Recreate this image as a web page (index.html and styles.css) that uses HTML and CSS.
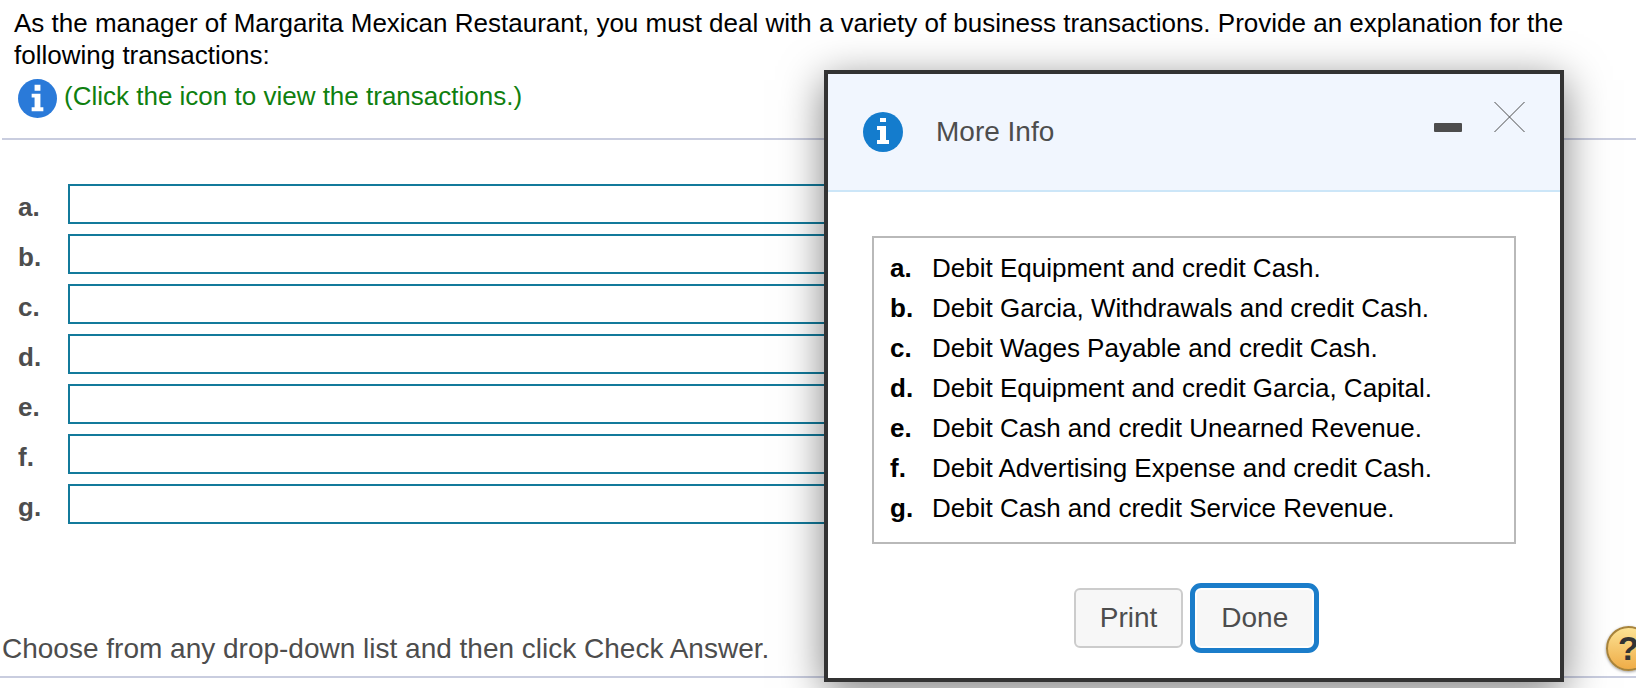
FILE: index.html
```html
<!DOCTYPE html>
<html lang="en">
<head>
  <meta charset="UTF-8">
  <meta name="viewport" content="width=device-width, initial-scale=1.0">
  <title>Margarita Mexican Restaurant</title>
  <link rel="stylesheet" href="styles.css">
</head>
<body>

<main class="page">
  <section class="question">
    <p class="intro">As the manager of Margarita Mexican Restaurant, you must deal with a variety of business transactions. Provide an explanation for the following transactions:</p>
    <a class="info-link" href="#more-info">
      <svg class="info-icon info-icon-small" viewBox="0 0 40 40" aria-hidden="true">
        <circle cx="20" cy="20" r="20"/>
        <path d="M17 6h6v6h-6zM14 15h9v14h3v4H14v-4h3V19h-3z"/>
      </svg>
      <span>(Click the icon to view the transactions.)</span>
    </a>
  </section>

  <form class="answers">
    <div class="answer-row"><label for="answer-a">a.</label><select id="answer-a"><option></option></select></div>
    <div class="answer-row"><label for="answer-b">b.</label><select id="answer-b"><option></option></select></div>
    <div class="answer-row"><label for="answer-c">c.</label><select id="answer-c"><option></option></select></div>
    <div class="answer-row"><label for="answer-d">d.</label><select id="answer-d"><option></option></select></div>
    <div class="answer-row"><label for="answer-e">e.</label><select id="answer-e"><option></option></select></div>
    <div class="answer-row"><label for="answer-f">f.</label><select id="answer-f"><option></option></select></div>
    <div class="answer-row"><label for="answer-g">g.</label><select id="answer-g"><option></option></select></div>
  </form>

  <footer class="hint">
    <p>Choose from any drop-down list and then click Check Answer.</p>
    <button class="help" type="button" aria-label="Help">?</button>
  </footer>
</main>

<div class="modal" id="more-info" role="dialog" aria-labelledby="modal-title">
  <div class="modal-header">
    <svg class="info-icon" viewBox="0 0 40 40" aria-hidden="true">
      <circle cx="20" cy="20" r="20"/>
      <path d="M17 6h6v4h-6zM14 14h9v14h3v4H14v-4h3V18h-3z"/>
    </svg>
    <h2 id="modal-title">More Info</h2>
    <div class="window-controls">
      <button type="button" aria-label="Minimize">
        <svg width="28" height="30" viewBox="0 0 28 30"><rect x="0" y="21" width="28" height="9" rx="1" fill="#4d4d4d"/></svg>
      </button>
      <button type="button" aria-label="Close">
        <svg width="31" height="30" viewBox="0 0 31 30"><path d="M.5 0l30 30M30.5 0L.5 30" stroke="#4d4d4d" stroke-width="1"/></svg>
      </button>
    </div>
  </div>

  <div class="modal-body">
    <table class="transactions">
      <tr><th scope="row">a.</th><td>Debit Equipment and credit Cash.</td></tr>
      <tr><th scope="row">b.</th><td>Debit Garcia, Withdrawals and credit Cash.</td></tr>
      <tr><th scope="row">c.</th><td>Debit Wages Payable and credit Cash.</td></tr>
      <tr><th scope="row">d.</th><td>Debit Equipment and credit Garcia, Capital.</td></tr>
      <tr><th scope="row">e.</th><td>Debit Cash and credit Unearned Revenue.</td></tr>
      <tr><th scope="row">f.</th><td>Debit Advertising Expense and credit Cash.</td></tr>
      <tr><th scope="row">g.</th><td>Debit Cash and credit Service Revenue.</td></tr>
    </table>
  </div>

  <div class="modal-buttons">
    <button class="button" type="button">Print</button>
    <button class="button button-focus" type="button">Done</button>
  </div>
</div>

</body>
</html>
```
FILE: styles.css
```css
* {
  box-sizing: border-box;
}
body {
  margin: 0;
  overflow: hidden;
  background: #fff;
  color: #000;
  font-family: "Liberation Sans", Arial, sans-serif;
  font-size: 26px;
  line-height: 32px;
}
p, h2 {
  margin: 0;
}
button {
  font-family: inherit;
  cursor: pointer;
}

/* question */
.question {
  margin-left: 2px;
  padding: 7px 60px 20px 12px;
  border-bottom: 2px solid #c9cddf;
}
.info-link {
  display: flex;
  align-items: flex-start;
  gap: 7px;
  margin: 8px 0 0 4px;
  color: #0f800f;
  line-height: 34px;
  text-decoration: none;
}
.info-icon {
  width: 40px;
  height: 40px;
  flex: none;
}
.info-icon circle {
  fill: #147ccd;
}
.info-icon path {
  fill: #fff;
}
.info-icon-small {
  width: 39px;
  height: 39px;
}
.info-icon-small circle {
  fill: #2a7ad9;
}

/* answers */
.answers {
  display: flex;
  flex-direction: column;
  gap: 10px;
  padding: 44px 110px 0 18px;
}
.answer-row {
  display: grid;
  grid-template-columns: 50px 1fr;
}
.answer-row label {
  padding-top: 7px;
  color: #4d4d4d;
  font-weight: bold;
}
.answer-row select {
  height: 40px;
  border: 2px solid #137a9b;
  border-radius: 0;
  background: #fff;
  font: inherit;
}

/* bottom bar */
.hint {
  display: flex;
  justify-content: space-between;
  align-items: center;
  margin-top: 102px;
  height: 52px;
  padding-left: 2px;
  padding-bottom: 5px;
  border-bottom: 2px solid #c9cddf;
  color: #4d4d4d;
  font-size: 28px;
}
.help {
  width: 45px;
  height: 45px;
  margin-right: -15px;
  padding: 0;
  border: 2px solid #a8843c;
  border-radius: 50%;
  background: linear-gradient(#fde394, #f0ad48);
  box-shadow: 0 1px 3px rgba(0, 0, 0, 0.4);
  color: #333;
  font-size: 34px;
  font-weight: bold;
}

/* modal */
.modal {
  position: absolute;
  top: 70px;
  right: 72px;
  width: 740px;
  border: 4px solid #333;
  background: #fff;
  box-shadow: 0 10px 40px rgba(0, 0, 0, 0.5);
}
.modal-header {
  display: flex;
  align-items: center;
  height: 118px;
  padding: 0 35px;
  border-bottom: 2px solid #cce6f8;
  background: #f1f6fe;
  color: #4d4d4d;
}
.modal-header h2 {
  flex: 1;
  margin-left: 33px;
  font-size: 28px;
  font-weight: normal;
}
.window-controls {
  display: flex;
  gap: 32px;
  align-self: flex-start;
  padding-top: 28px;
}
.window-controls button {
  display: flex;
  padding: 0;
  border: 0;
  background: none;
}
.modal-body {
  padding: 44px;
}
.transactions {
  width: 100%;
  padding: 10px 16px 14px;
  border: 2px solid #b9b9b9;
  border-spacing: 0;
}
.transactions th,
.transactions td {
  height: 40px;
  padding: 0;
  text-align: left;
}
.transactions th {
  width: 42px;
}
.modal-buttons {
  display: flex;
  justify-content: center;
  gap: 12px;
  padding-bottom: 30px;
}
.button {
  height: 60px;
  padding: 0 24px;
  border: 2px solid #ccc;
  border-radius: 6px;
  background: #f7f7f7;
  color: #4d4d4d;
  font-size: 28px;
}
.button-focus {
  border-color: #fff;
  outline: 5px solid #1b7dca;
}
```
